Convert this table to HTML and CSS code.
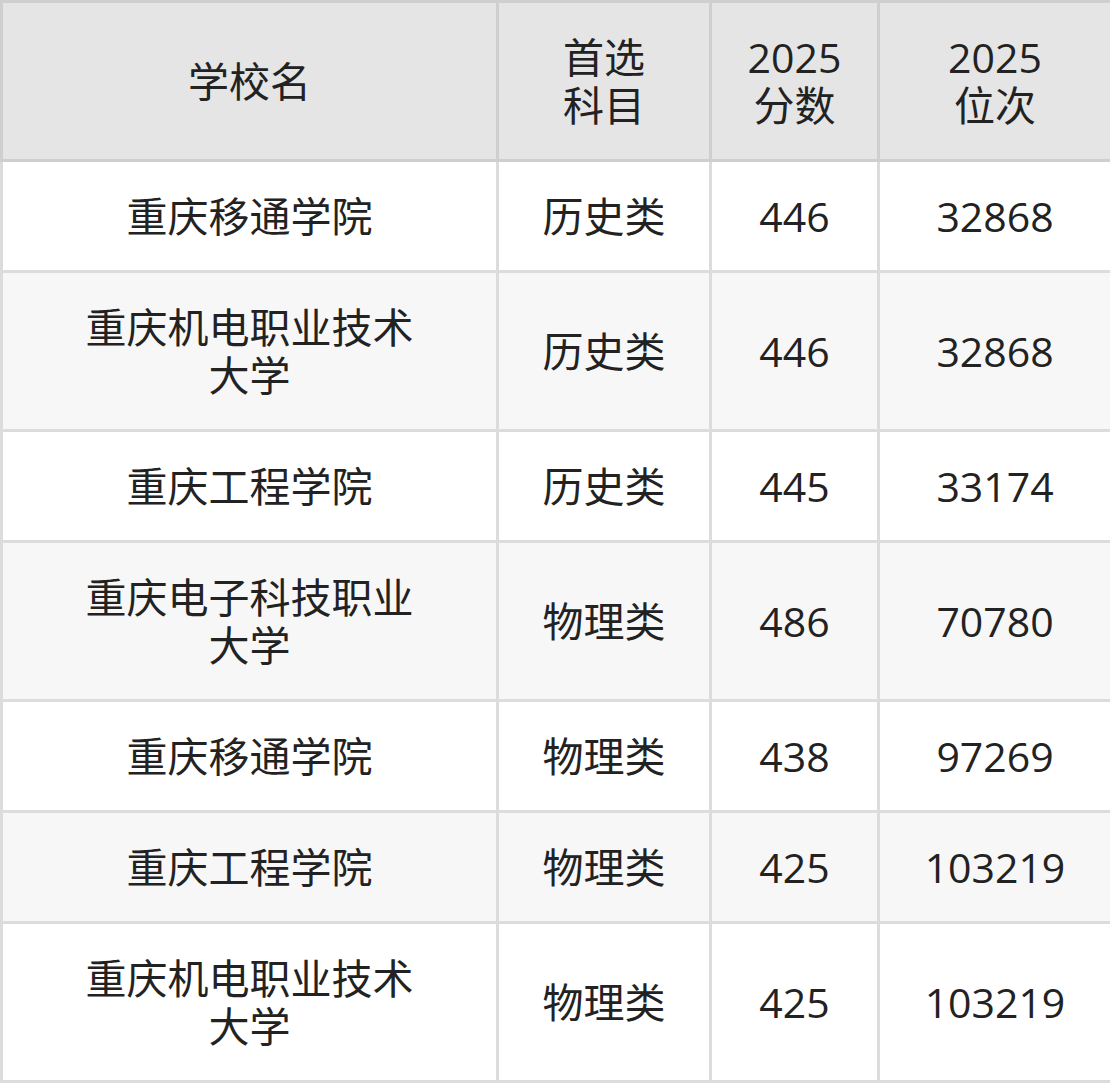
FILE: index.html
```html
<!DOCTYPE html>
<html lang="zh">
<head>
<meta charset="utf-8">
<title>重庆院校分数位次</title>
<link rel="stylesheet" href="styles.css">
</head>
<body>
<table class="score-table">
  <colgroup>
    <col class="c-name">
    <col class="c-subj">
    <col class="c-score">
    <col class="c-rank">
  </colgroup>
  <thead>
    <tr>
      <th>学校名</th>
      <th>首选<br>科目</th>
      <th>2025<br>分数</th>
      <th>2025<br>位次</th>
    </tr>
  </thead>
  <tbody>
    <tr><td class="name">重庆移通学院</td><td>历史类</td><td>446</td><td>32868</td></tr>
    <tr><td class="name">重庆机电职业技术大学</td><td>历史类</td><td>446</td><td>32868</td></tr>
    <tr><td class="name">重庆工程学院</td><td>历史类</td><td>445</td><td>33174</td></tr>
    <tr><td class="name">重庆电子科技职业大学</td><td>物理类</td><td>486</td><td>70780</td></tr>
    <tr><td class="name">重庆移通学院</td><td>物理类</td><td>438</td><td>97269</td></tr>
    <tr><td class="name">重庆工程学院</td><td>物理类</td><td>425</td><td>103219</td></tr>
    <tr><td class="name">重庆机电职业技术大学</td><td>物理类</td><td>425</td><td>103219</td></tr>
  </tbody>
</table>
</body>
</html>
```

FILE: styles.css
```css
html, body {
  margin: 0;
  padding: 0;
  background: #ffffff;
}

.score-table {
  width: 1110px;
  border-collapse: collapse;
  table-layout: fixed;
  font-family: "Open Sans", "Noto Sans CJK SC", sans-serif;
  font-size: 41px;
  line-height: 48px;
  color: #222222;
}

.c-name { width: 496px; }
.c-subj { width: 213px; }
.c-score { width: 168px; }
.c-rank { width: 233px; }

.score-table th,
.score-table td {
  padding: 30px 0;
  text-align: center;
  vertical-align: middle;
  font-weight: normal;
}

.score-table th {
  background: #e5e5e5;
  border: 3px solid #cfcfcf;
}

.score-table td {
  border: 3px solid #dcdcdc;
}

.score-table td.name {
  padding-left: 70px;
  padding-right: 70px;
}

.score-table tbody tr:nth-child(odd) td {
  background: #ffffff;
}

.score-table tbody tr:nth-child(even) td {
  background: #f7f7f7;
}
```
